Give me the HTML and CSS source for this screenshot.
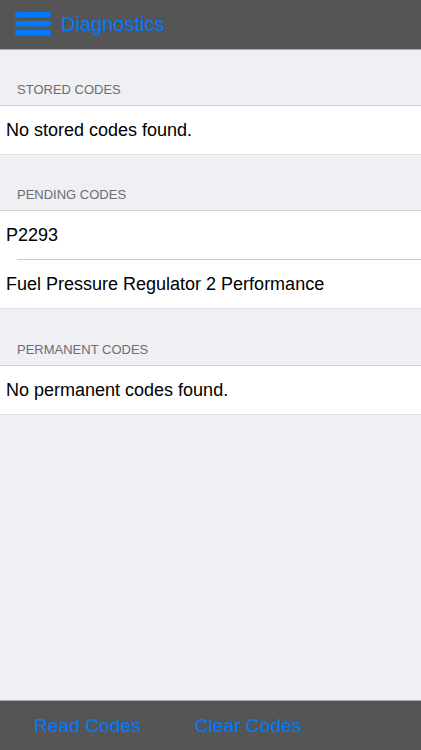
FILE: index.html
```html
<!DOCTYPE html>
<html>
<head>
<meta charset="utf-8">
<link rel="stylesheet" href="styles.css">
</head>
<body>
<div class="app">
  <header class="topbar">
    <svg class="menu" width="36" height="24" viewBox="0 0 36 24">
      <rect x="0" y="0" width="36" height="5.5" rx="2.5" fill="#007aff"/>
      <rect x="0" y="9" width="36" height="5.5" rx="2.5" fill="#007aff"/>
      <rect x="0" y="18" width="36" height="5.5" rx="2.5" fill="#007aff"/>
    </svg>
    <span class="title">Diagnostics</span>
  </header>
  <main class="content">
    <section class="group">
      <div class="group-title">STORED CODES</div>
      <div class="cells">
        <div class="cell">No stored codes found.</div>
      </div>
    </section>
    <section class="group">
      <div class="group-title">PENDING CODES</div>
      <div class="cells">
        <div class="cell">P2293</div>
        <div class="cell">Fuel Pressure Regulator 2 Performance</div>
      </div>
    </section>
    <section class="group group-last">
      <div class="group-title">PERMANENT CODES</div>
      <div class="cells">
        <div class="cell">No permanent codes found.</div>
      </div>
    </section>
  </main>
  <footer class="toolbar">
    <span class="tool">Read Codes</span>
    <span class="tool">Clear Codes</span>
  </footer>
</div>
</body>
</html>
```

FILE: styles.css
```css
html, body {
  margin: 0;
  padding: 0;
}
body {
  font-family: "Liberation Sans", Arial, sans-serif;
  background: #efeff4;
}
.app {
  width: 421px;
  height: 750px;
  display: flex;
  flex-direction: column;
  overflow: hidden;
}
.topbar {
  height: 50px;
  box-sizing: border-box;
  background: #555556;
  border-bottom: 1px solid #a9a9ab;
  display: flex;
  align-items: center;
  padding-left: 15px;
  flex-shrink: 0;
}
.menu {
  display: block;
  margin-top: -1px;
}
.title {
  color: #007aff;
  font-size: 20px;
  margin-left: 10px;
  margin-top: -1px;
}
.content {
  flex: 1;
  background: #efeff4;
}
.group-last {
  margin-top: 1px;
}
.group-title {
  height: 55px;
  box-sizing: border-box;
  display: flex;
  align-items: flex-end;
  padding: 0 0 8px 17px;
  font-size: 13px;
  color: #6d6d72;
}
.cells {
  background: #fff;
  border-top: 1px solid #d1d1d6;
  border-bottom: 1px solid #e0e0e5;
}
.cell {
  height: 48px;
  display: flex;
  align-items: center;
  padding-left: 6px;
  font-size: 18px;
  color: #000;
  position: relative;
}
.cell + .cell {
  margin-top: 1px;
}
.cell + .cell::before {
  content: "";
  position: absolute;
  top: -1px;
  left: 17px;
  right: 0;
  height: 1px;
  background: #c8c7cc;
}
.toolbar {
  height: 50px;
  box-sizing: border-box;
  background: #555556;
  border-top: 1px solid #a9a9ab;
  display: flex;
  align-items: center;
  padding-left: 34px;
  gap: 54px;
  flex-shrink: 0;
}
.tool {
  color: #007aff;
  font-size: 19.2px;
}
```
